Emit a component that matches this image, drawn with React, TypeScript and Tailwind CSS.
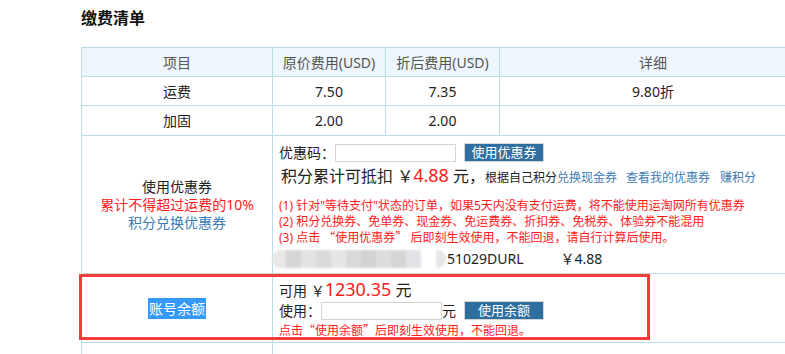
import React from "react";

const font = { fontFamily: '"Noto Sans", "Noto Sans CJK SC", sans-serif' };

function Q({ c }: { c: string }) {
  return <span style={{ fontFamily: '"Noto Sans CJK SC", sans-serif' }}>{c}</span>;
}

export default function App() {
  const bd = "border border-[#bddde6]";
  return (
    <div className="relative w-[785px] h-[354px] overflow-hidden bg-white text-[#222]" style={font}>
      <div className="pl-[81px]">
        <h2 className="pt-[7px] h-[47px] text-[16px] font-bold leading-[22px] text-[#111]">缴费清单</h2>
        <table className="w-[726px] border-collapse text-[14px] text-center table-fixed">
          <colgroup>
            <col className="w-[191px]" />
            <col className="w-[113px]" />
            <col className="w-[114px]" />
            <col />
          </colgroup>
          <tbody>
            <tr className="h-[29px] bg-[#eef6fd] text-[#555]">
              <td className={bd}>项目</td>
              <td className={bd}>原价费用(USD)</td>
              <td className={bd}>折后费用(USD)</td>
              <td className={bd}>详细</td>
            </tr>
            <tr className="h-[29px]">
              <td className={bd}>运费</td>
              <td className={bd}>7.50</td>
              <td className={bd}>7.35</td>
              <td className={bd}>9.80折</td>
            </tr>
            <tr className="h-[30px]">
              <td className={bd}>加固</td>
              <td className={bd}>2.00</td>
              <td className={bd}>2.00</td>
              <td className={bd}></td>
            </tr>
            <tr className="h-[138px]">
              <td className={`${bd} leading-[18px]`}>
                <div>使用优惠券</div>
                <div className="text-[#ff1a1a]">累计不得超过运费的10%</div>
                <div className="text-[#3c7bb4]">积分兑换优惠券</div>
              </td>
              <td className={`${bd} text-left align-top pl-[6px] pt-[7px]`} colSpan={3}>
                <div className="flex items-center h-[19px]">
                  <span className="text-[14px]">优惠码：</span>
                  <span className="w-[121px] h-[18px] border border-[#d4d4d4] bg-white"></span>
                  <span className="ml-[8px] w-[80px] h-[19px] bg-[#2f6f9f] border border-[#d6d6d6] text-white text-[13px] leading-[17px] text-center">使用优惠券</span>
                </div>
                <div className="flex items-baseline mt-[2px] h-[22px] whitespace-nowrap leading-[22px]">
                  <span className="text-[16px] ml-[2px]">积分累计可抵扣 ￥</span>
                  <span className="text-[18px] text-[#ff1a1a]">4.88</span>
                  <span className="text-[16px]">&nbsp;元，</span>
                  <span className="text-[12px]">根据自己积分</span>
                  <span className="text-[12px] text-[#3c7bb4]">兑换现金券</span>
                  <span className="text-[12px] text-[#3c7bb4] ml-[9px]">查看我的优惠券</span>
                  <span className="text-[12px] text-[#3c7bb4] ml-[10px]">赚积分</span>
                </div>
                <div className="mt-[12px] text-[12px] leading-[15.5px] text-[#ff1a1a] whitespace-nowrap">
                  <div>(1) 针对"等待支付"状态的订单，如果5天内没有支付运费，将不能使用运淘网所有优惠券</div>
                  <div>(2) 积分兑换券、免单券、现金券、免运费券、折扣券、免税券、体验券不能混用</div>
                  <div>(3) 点击 <Q c="“" />使用优惠券<Q c="”" /> 后即刻生效使用，不能回退，请自行计算后使用。</div>
                </div>
                <div className="flex items-center mt-[3px] h-[20px] -ml-[7px] whitespace-nowrap">
                  <div className="w-[174px] h-[18px] rounded-full overflow-hidden flex blur-[1px] bg-[#eee]">
                    <span className="w-[14px] bg-[#e8e8e8]"></span>
                    <span className="w-[15px] bg-[#d6d6d6]"></span>
                    <span className="w-[15px] bg-[#e3e3e3]"></span>
                    <span className="w-[15px] bg-[#dadada]"></span>
                    <span className="w-[15px] bg-[#e6e6e4]"></span>
                    <span className="w-[15px] bg-[#d9d9db]"></span>
                    <span className="w-[15px] bg-[#d2d2d2]"></span>
                    <span className="w-[15px] bg-[#dcdcdc]"></span>
                    <span className="w-[15px] bg-[#d5d5d5]"></span>
                    <span className="w-[15px] bg-[#e2e2e6]"></span>
                    <span className="w-[15px] bg-white"></span>
                    <span className="w-[10px] bg-[#e6e6e6]"></span>
                  </div>
                  <span className="text-[14px] ml-[1px]">51029DURL</span>
                  <span className="text-[14px] ml-[37px]">￥4.88</span>
                </div>
              </td>
            </tr>
            <tr className="h-[69px]">
              <td className={bd}>
                <span className="bg-[#3399ff] text-white px-[1px] py-[1px]">账号余额</span>
              </td>
              <td className={`${bd} text-left align-top pl-[6px] pt-[5px]`} colSpan={3}>
                <div className="flex items-baseline h-[20px] whitespace-nowrap leading-[20px]">
                  <span className="text-[14px]">可用 ￥</span>
                  <span className="text-[18px] text-[#ff1a1a]">1230.35</span>
                  <span className="text-[16px]">&nbsp;元</span>
                </div>
                <div className="flex items-center h-[19px] mt-[2px]">
                  <span className="text-[14px]">使用：</span>
                  <span className="w-[121px] h-[18px] border border-[#d4d4d4] bg-white"></span>
                  <span className="text-[14px]">元</span>
                  <span className="ml-[8px] w-[80px] h-[19px] bg-[#2f6f9f] border border-[#d6d6d6] text-white text-[13px] leading-[17px] text-center">使用余额</span>
                </div>
                <div className="mt-[2px] text-[12px] leading-[16px] text-[#ff1a1a] whitespace-nowrap">点击<Q c="“" />使用余额<Q c="”" />后即刻生效使用，不能回退。</div>
              </td>
            </tr>
            <tr className="h-[40px]">
              <td className={bd}></td>
              <td className={bd} colSpan={3}></td>
            </tr>
          </tbody>
        </table>
      </div>
      <div className="absolute left-[79px] top-[274px] w-[571px] h-[66px] border-[3px] border-[#f23c3c]"></div>
    </div>
  );
}
